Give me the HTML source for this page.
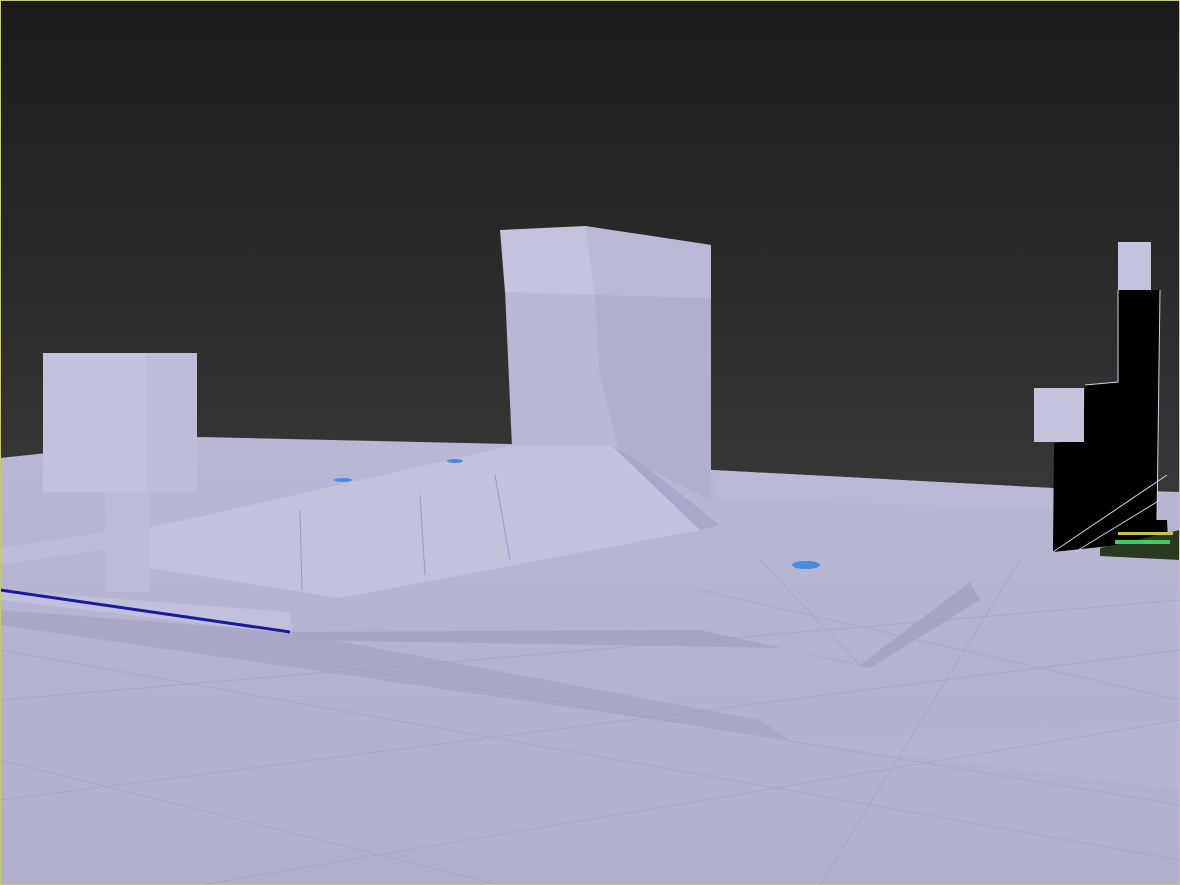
<!DOCTYPE html>
<html><head><style>
html,body{margin:0;padding:0;width:1180px;height:885px;overflow:hidden;background:#222}
svg{display:block}
</style></head><body>
<svg width="1180" height="885" viewBox="0 0 1180 885" xmlns="http://www.w3.org/2000/svg">
<defs>
<linearGradient id="bg" x1="0" y1="0" x2="0" y2="1">
<stop offset="0" stop-color="#1b1b1b"/><stop offset="0.55" stop-color="#373737"/><stop offset="1" stop-color="#3c3c3c"/>
</linearGradient>
<linearGradient id="gr" x1="0" y1="0" x2="0" y2="1">
<stop offset="0" stop-color="#b8b8d4"/><stop offset="1" stop-color="#b0b0cd"/>
</linearGradient>
</defs>
<rect width="1180" height="885" fill="url(#bg)"/>
<!-- ground -->
<polygon points="0,458 200,437 510,444 712,470 1052,488 1180,492 1180,885 0,885" fill="url(#gr)"/>
<polygon points="712,470 1052,488 1052,510 720,498" fill="#babad6"/>
<!-- strips -->
<polygon points="0,548 610,455 640,470 0,565" fill="#bcbcd8"/>
<polygon points="0,610 290,632 760,720 790,740 760,735 0,625" fill="#a8a8c6"/>
<polygon points="0,590 290,612 292,634 0,600" fill="#c0c0dc"/>
<line x1="0" y1="590" x2="290" y2="632" stroke="#1a1aa0" stroke-width="3"/>
<polygon points="290,632 700,630 860,665 970,582 980,600 870,668 780,648 300,640" fill="#a6a6c4"/>
<polygon points="1180,720 780,740 1180,790" fill="#b5b5d1"/>
<g stroke="#9c9cc4" stroke-width="1" fill="none" opacity="0.55">
<line x1="0" y1="700" x2="1180" y2="600"/>
<line x1="0" y1="800" x2="1180" y2="650"/>
<line x1="200" y1="885" x2="1180" y2="720"/>
<line x1="0" y1="650" x2="1180" y2="860"/>
<line x1="300" y1="660" x2="1180" y2="805"/>
<line x1="700" y1="590" x2="1180" y2="700"/>
<line x1="0" y1="760" x2="500" y2="885"/>
<line x1="820" y1="885" x2="1020" y2="560"/>
<line x1="860" y1="665" x2="760" y2="560"/>
</g>
<!-- central tower -->
<polygon points="505,290 711,298 711,500 700,495 612,452 512,447" fill="#b9b9d5"/>
<polygon points="595,295 711,298 711,500 620,455 600,375" fill="#b0b0cd"/>
<polygon points="500,230 585,226 711,245 711,298 505,292" fill="#c3c3dd"/>
<polygon points="585,226 711,245 711,298 595,295" fill="#babad6"/>
<!-- ramp -->
<polygon points="612,446 700,530 720,525 640,462" fill="#a8a8c8"/>
<polygon points="150,568 340,598 700,530 612,446 510,446 150,528" fill="#c2c2dc"/>
<g stroke="#9a9ac8" stroke-width="1"><line x1="300" y1="510" x2="302" y2="590"/><line x1="420" y1="495" x2="425" y2="575"/><line x1="495" y1="475" x2="510" y2="560"/></g>
<!-- left billboard -->
<rect x="105" y="480" width="45" height="112" fill="#bcbcd8"/>
<rect x="43" y="353" width="154" height="139" fill="#bdbdd9"/>
<rect x="43" y="353" width="103" height="139" fill="#c2c2dd"/>
<!-- right black tower -->
<polygon points="1053,552 1054,443 1083,440 1085,385 1118,382 1118,290 1160,290 1157,520 1167,520 1168,540" fill="#000"/>
<g stroke="#d0d0e8" stroke-width="1" fill="none">
<polyline points="1118,290 1118,382 1085,385"/><polyline points="1160,290 1157,520"/>
<line x1="1053" y1="552" x2="1167" y2="475"/><line x1="1075" y1="552" x2="1160" y2="500"/>
</g>
<polygon points="1100,548 1180,530 1180,560 1100,556" fill="#2a3a20"/>
<rect x="1115" y="540" width="55" height="4" fill="#3ad060"/>
<rect x="1118" y="532" width="55" height="3" fill="#d0c040"/>
<rect x="1118" y="242" width="33" height="48" fill="#c4c4de"/>
<rect x="1034" y="388" width="50" height="54" fill="#c4c4de"/>
<!-- blue dots -->
<ellipse cx="806" cy="565" rx="14" ry="4" fill="#4a8ae0"/>
<ellipse cx="343" cy="480" rx="9" ry="2" fill="#4a8ae0"/>
<ellipse cx="455" cy="461" rx="8" ry="2" fill="#4a8ae0"/>
<rect x="0.5" y="0.5" width="1179" height="884" fill="none" stroke="#c8c87a" stroke-width="1"/>
</svg>
</body></html>
